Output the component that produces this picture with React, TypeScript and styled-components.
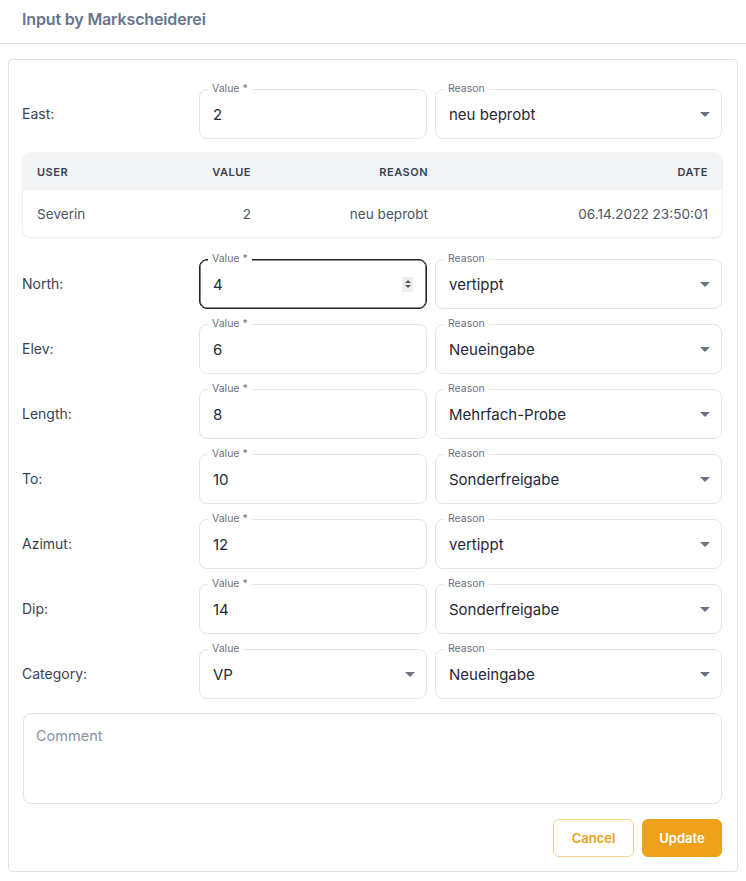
import React from "react";
import styled, { createGlobalStyle } from "styled-components";

const Global = createGlobalStyle`
  html, body { margin: 0; padding: 0; background: #ffffff; }
  body { font-family: Inter, "Noto Sans", Arial, sans-serif; color: #374151; }
  * { box-sizing: border-box; }
`;

const Page = styled.div`
  width: 746px;
  min-height: 881px;
  background: #fff;
`;

const Header = styled.div`
  height: 44px;
  padding: 0 22px;
  display: flex;
  align-items: center;
  border-bottom: 1px solid #dcdfe4;
  padding-bottom: 6px;
`;

const Title = styled.h1`
  margin: 0;
  font-size: 16px;
  font-weight: 600;
  color: #66758c;
  letter-spacing: -0.15px;
`;

const Card = styled.div`
  margin: 15px 8px 8px 8px;
  border: 1px solid #dfe2e7;
  border-radius: 4px;
  padding: 29px 15px 14px 14px;
  display: flex;
  flex-direction: column;
`;

const Row = styled.div<{ $mt?: number }>`
  display: grid;
  grid-template-columns: 168px 228px 1fr;
  column-gap: 8px;
  align-items: center;
  height: 50px;
  margin-top: ${(p) => p.$mt ?? 0}px;
`;

const RowLabel = styled.div`
  font-size: 14px;
  color: #3b4352;
  margin-left: -1px;
  margin-top: -1px;
`;

const Field = styled.div<{ $focused?: boolean }>`
  position: relative;
  height: 50px;
  border-radius: 8px;
  border: 1px solid ${(p) => (p.$focused ? "#1f2329" : "#e2e5eb")};
  box-shadow: ${(p) => (p.$focused ? "inset 0 0 0 0.6px #1f2329" : "none")};
  display: flex;
  align-items: center;
  padding: 0 11px 0 13px;
  background: #fff;
`;

const FloatLabel = styled.span`
  position: absolute;
  top: -7px;
  left: 8px;
  padding: 0 4px;
  background: #fff;
  font-size: 10.5px;
  line-height: 12px;
  color: #6b7280;
`;

const FieldText = styled.span`
  flex: 1;
  font-size: 15px;
  color: #1f2937;
`;

const Arrow = styled.span`
  width: 0;
  height: 0;
  border-left: 5px solid transparent;
  border-right: 5px solid transparent;
  border-top: 5px solid #6b7280;
  margin-top: 1px;
`;

const Spin = styled.span`
  width: 11px;
  height: 15px;
  background: #ededed;
  display: flex;
  flex-direction: column;
  align-items: center;
  justify-content: center;
  gap: 2px;
  margin-right: 2px;
`;

const TriUp = styled.span`
  width: 0;
  height: 0;
  border-left: 3px solid transparent;
  border-right: 3px solid transparent;
  border-bottom: 3px solid #555;
`;

const TriDown = styled.span`
  width: 0;
  height: 0;
  border-left: 3px solid transparent;
  border-right: 3px solid transparent;
  border-top: 3px solid #555;
`;

const Table = styled.div`
  margin-top: 14px;
  border-radius: 7px;
  overflow: hidden;
  box-shadow: 0 1px 3px rgba(17, 24, 39, 0.08), 0 0 0 1px rgba(17, 24, 39, 0.03);
`;

const TRow = styled.div<{ $head?: boolean }>`
  display: grid;
  grid-template-columns: 72px 142px 177px 1fr;
  height: ${(p) => (p.$head ? 37 : 47)}px;
  align-items: center;
  background: ${(p) => (p.$head ? "#f3f4f6" : "#fff")};
  padding: 0 14px;
  font-size: ${(p) => (p.$head ? "11px" : "13.6px")};
  font-weight: ${(p) => (p.$head ? 600 : 400)};
  letter-spacing: ${(p) => (p.$head ? "0.5px" : "0")};
  color: ${(p) => (p.$head ? "#374151" : "#4b5563")};
  text-transform: ${(p) => (p.$head ? "uppercase" : "none")};
`;

const Cell = styled.div<{ $right?: boolean }>`
  text-align: ${(p) => (p.$right ? "right" : "left")};
  white-space: nowrap;
`;

const Comment = styled.div`
  margin-top: 14px;
  height: 91px;
  border: 1px solid #e2e5eb;
  border-radius: 8px;
  padding: 13px 12px;
  font-size: 14.5px;
  color: #8792a4;
`;

const Actions = styled.div`
  margin-top: 15px;
  display: flex;
  justify-content: flex-end;
  gap: 8px;
`;

const Button = styled.button<{ $primary?: boolean }>`
  height: 38px;
  border-radius: 6px;
  font-family: Inter, Arial, sans-serif;
  font-size: 13px;
  font-weight: 600;
  padding: 0;
  width: ${(p) => (p.$primary ? 80 : 81)}px;
  cursor: pointer;
  border: 1px solid ${(p) => (p.$primary ? "#eea11b" : "#f8d38d")};
  background: ${(p) => (p.$primary ? "#eea11b" : "#fff")};
  color: ${(p) => (p.$primary ? "#fff" : "#eea11b")};
`;

type R = {
  label: string;
  value: string;
  reason: string;
  valueLabel?: string;
  select?: boolean;
  focused?: boolean;
};

const rows: R[] = [
  { label: "North:", value: "4", reason: "vertippt", focused: true },
  { label: "Elev:", value: "6", reason: "Neueingabe" },
  { label: "Length:", value: "8", reason: "Mehrfach-Probe" },
  { label: "To:", value: "10", reason: "Sonderfreigabe" },
  { label: "Azimut:", value: "12", reason: "vertippt" },
  { label: "Dip:", value: "14", reason: "Sonderfreigabe" },
  { label: "Category:", value: "VP", reason: "Neueingabe", valueLabel: "Value", select: true },
];

function FormRow({ r, mt }: { r: R; mt?: number }) {
  return (
    <Row $mt={mt}>
      <RowLabel>{r.label}</RowLabel>
      <Field $focused={r.focused}>
        <FloatLabel>{r.valueLabel ?? "Value *"}</FloatLabel>
        <FieldText>{r.value}</FieldText>
        {r.select && <Arrow />}
        {r.focused && (
          <Spin>
            <TriUp />
            <TriDown />
          </Spin>
        )}
      </Field>
      <Field>
        <FloatLabel>Reason</FloatLabel>
        <FieldText>{r.reason}</FieldText>
        <Arrow />
      </Field>
    </Row>
  );
}

export default function App() {
  return (
    <Page>
      <Global />
      <Header>
        <Title>Input by Markscheiderei</Title>
      </Header>
      <Card>
        <FormRow r={{ label: "East:", value: "2", reason: "neu beprobt" }} />
        <Table>
          <TRow $head>
            <Cell>User</Cell>
            <Cell $right>Value</Cell>
            <Cell $right>Reason</Cell>
            <Cell $right>Date</Cell>
          </TRow>
          <TRow>
            <Cell>Severin</Cell>
            <Cell $right>2</Cell>
            <Cell $right>neu beprobt</Cell>
            <Cell $right>06.14.2022 23:50:01</Cell>
          </TRow>
        </Table>
        {rows.map((r, i) => (
          <FormRow key={r.label} r={r} mt={i === 0 ? 22 : 15} />
        ))}
        <Comment>Comment</Comment>
        <Actions>
          <Button>Cancel</Button>
          <Button $primary>Update</Button>
        </Actions>
      </Card>
    </Page>
  );
}
